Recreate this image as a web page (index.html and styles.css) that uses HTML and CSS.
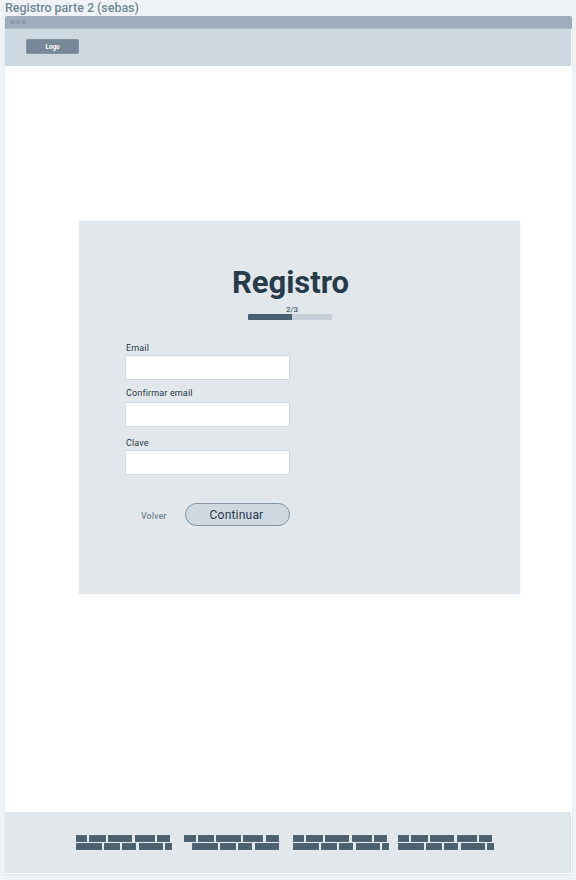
FILE: index.html
```html
<!DOCTYPE html>
<html lang="es">
<head>
<meta charset="utf-8">
<title>Registro parte 2 (sebas)</title>
<link rel="stylesheet" href="styles.css">
</head>
<body>
<div class="caption"><span>Registro parte 2 (sebas)</span></div>
<div class="window">
  <div class="titlebar"><i></i><i></i><i></i></div>
  <header class="header"><div class="logo">Logo</div></header>
  <main class="main">
    <section class="panel">
      <h1 class="heading">Registro</h1>
      <div class="step">2/3</div>
      <div class="progress"><div class="progress-fill"></div></div>
      <form class="form">
        <label class="label label-email" for="email">Email</label>
        <input class="input" id="email" type="text">
        <label class="label label-confirm" for="confirm">Confirmar email</label>
        <input class="input" id="confirm" type="text">
        <label class="label label-clave" for="clave">Clave</label>
        <input class="input" id="clave" type="password">
        <div class="actions">
          <a class="back">Volver</a>
          <button class="next" type="button"><span>Continuar</span></button>
        </div>
      </form>
    </section>
  </main>
  <footer class="footer">
    <div class="group">
      <div class="row top"><i></i><i></i><i></i><i></i><i></i></div>
      <div class="row bottom"><i></i><i></i><i></i><i></i><i></i></div>
    </div>
    <div class="group">
      <div class="row top"><i></i><i></i><i></i><i></i><i></i></div>
      <div class="row bottom indented"><i></i><i></i><i></i><i></i></div>
    </div>
    <div class="group">
      <div class="row top"><i></i><i></i><i></i><i></i><i></i></div>
      <div class="row bottom"><i></i><i></i><i></i><i></i><i></i></div>
    </div>
    <div class="group">
      <div class="row top"><i></i><i></i><i></i><i></i><i></i></div>
      <div class="row bottom"><i></i><i></i><i></i><i></i><i></i></div>
    </div>
  </footer>
</div>
</body>
</html>
```
FILE: styles.css
```css
* { box-sizing: border-box; }
body {
  margin: 0;
  height: 880px;
  overflow: hidden;
  background: #eff3f7;
  color: #283b49;
  font-family: Roboto, "Liberation Sans", sans-serif;
}
.caption {
  height: 16px;
  padding-left: 5px;
  font-size: 12.5px;
  line-height: 15px;
  font-weight: 500;
  letter-spacing: -0.03px;
  color: #728797;
  white-space: nowrap;
}
.window {
  display: flex;
  flex-direction: column;
  width: 567px;
  height: 858px;
  margin-left: 5px;
  background: #fff;
  border-radius: 2px 2px 0 0;
  box-shadow: 0 1px 2px rgba(70, 95, 115, 0.12);
}
.titlebar {
  display: flex;
  align-items: center;
  gap: 1px;
  height: 13px;
  padding-left: 5px;
  background: #9eadb9;
  border-bottom: 1px solid #afbdc8;
  border-radius: 2px 2px 0 0;
}
.titlebar i { width: 4.5px; height: 4.5px; border-radius: 50%; background: #8b9ba8; }
.header {
  width: 566px;
  height: 37px;
  padding: 10px 0 0 21px;
  background: #ced8e0;
}
.logo {
  width: 53px;
  height: 15px;
  border-radius: 1.5px;
  background: #788896;
  border: 1px solid #8594a1;
  color: #fff;
  font-size: 6.5px;
  font-weight: 700;
  line-height: 14px;
  text-align: center;
  letter-spacing: -0.2px;
}
.main { height: 746px; padding: 155px 0 0 74px; }
.panel { width: 441px; height: 373px; background: #e2e7eb; box-shadow: 0 0 0 0.5px #eceff2; }
.heading {
  width: 117px;
  height: 84px;
  margin: 0 0 0 153px;
  padding-top: 44px;
  font-size: 31px;
  line-height: 36px;
  font-weight: 700;
  letter-spacing: -0.05px;
}
.step { margin-left: 207px; height: 9px; font-size: 8px; line-height: 10px; letter-spacing: -0.15px; }
.progress { width: 84px; height: 6px; margin-left: 169px; background: #c7cfda; border-radius: 1px; }
.progress-fill { width: 43.5px; height: 6px; background: #4a606f; border-radius: 1px 0 0 1px; }
.form { display: flex; flex-direction: column; align-items: flex-start; padding: 22px 0 0 46px; }
.label { display: block; padding-left: 1px; height: 13px; font-size: 9px; line-height: 12px; letter-spacing: 0.15px; }
.label-confirm { margin-top: 7px; height: 15px; }
.label-clave { margin-top: 10px; height: 13px; }
.input {
  width: 165px;
  height: 25px;
  padding: 0 4px;
  border: 1px solid #d0dae3;
  border-radius: 0;
  background: #fff;
  outline: none;
}
.actions { display: flex; align-items: center; margin-top: 28px; }
.back { width: 44px; margin-left: 16px; font-size: 9px; line-height: 12px; font-weight: 500; color: #798d9c; padding-top: 2px; }
.next {
  width: 105px;
  height: 23px;
  padding: 2px 2px 0 0;
  border: 1px solid #8495a4;
  border-radius: 12px;
  background: #ced8e1;
  color: #283b49;
  font-family: inherit;
  font-size: 12px;
  line-height: 19px;
  letter-spacing: 0.2px;
}
.footer {
  display: flex;
  width: 566px;
  height: 61px;
  padding: 23px 0 0 70.6px;
  background: #e2e7eb;
}
.group { width: 108.5px; }
.group:nth-child(3) { width: 105px; }
.group:nth-child(4) { width: 97px; }
.row { display: flex; gap: 2.3px; height: 7px; margin-bottom: 1px; }
.row i { height: 7px; background: #4c606e; box-shadow: inset 0 0 0 0.5px #586d7b; }
.top i:nth-child(1) { width: 11.5px; }
.top i:nth-child(2) { width: 16.3px; }
.top i:nth-child(3) { width: 24.5px; }
.top i:nth-child(4) { width: 20px; }
.top i:nth-child(5) { width: 13.3px; }
.bottom i:nth-child(1) { width: 26.2px; }
.bottom i:nth-child(2) { width: 15.5px; }
.bottom i:nth-child(3) { width: 14.6px; }
.bottom i:nth-child(4) { width: 24px; }
.bottom i:nth-child(5) { width: 7px; }
.indented { padding-left: 7.5px; }
```
